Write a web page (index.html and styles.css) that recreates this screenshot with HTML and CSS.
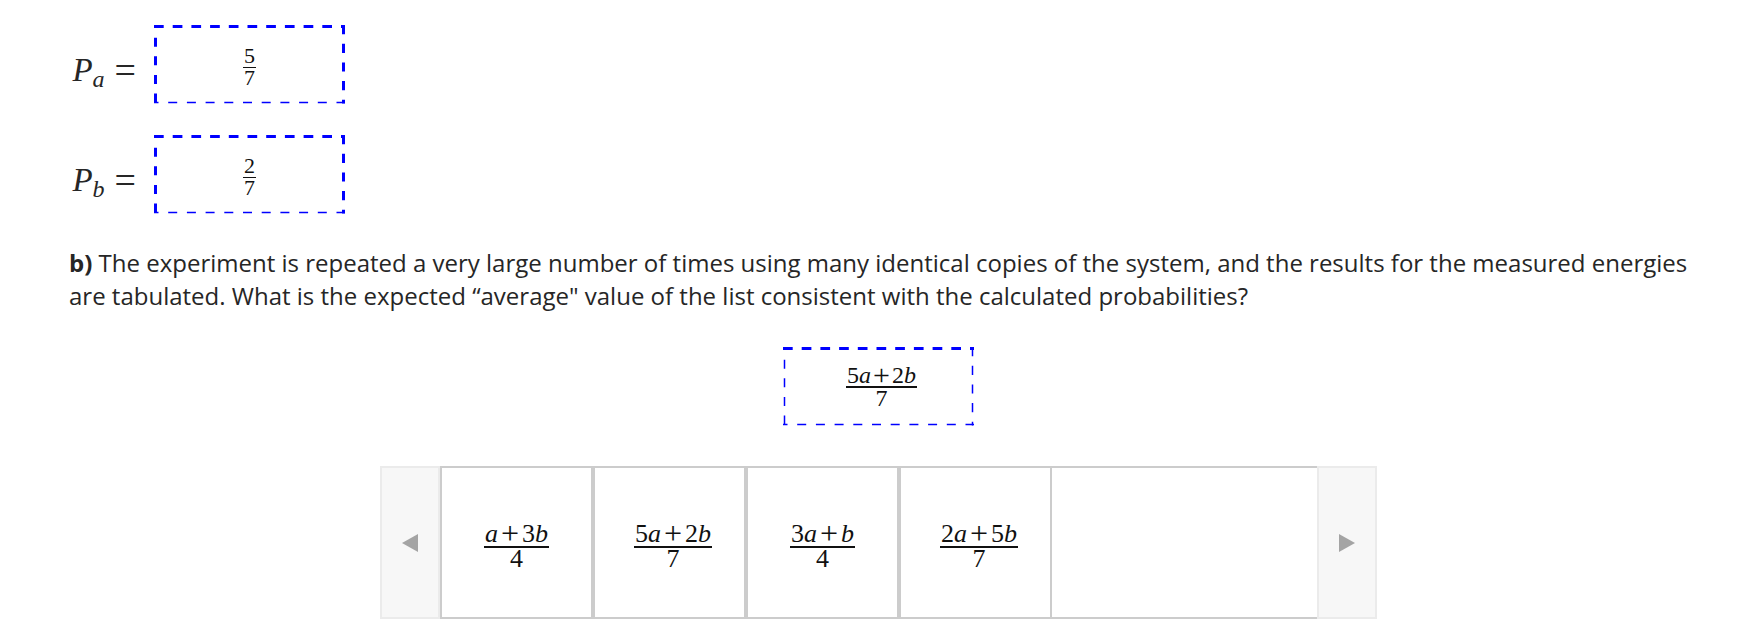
FILE: index.html
```html
<!DOCTYPE html>
<html lang="en">
<head>
<meta charset="utf-8">
<meta name="viewport" content="width=device-width, initial-scale=1">
<title>Measured energies</title>
<link rel="stylesheet" href="styles.css">
</head>
<body>
<svg class="defs" aria-hidden="true">
  <defs>
    <g id="dashes" fill="none" stroke="#00f">
      <path stroke-width="3" stroke-dasharray="9.7 9" d="M0 1.5H191"/>
      <path stroke-width="1.4" stroke-dasharray="9 9.7" stroke-dashoffset="4.5" d="M0 77.5H191"/>
    </g>
    <g id="sides" fill="none" stroke="#00f">
      <path stroke-dasharray="9.2 9.5" d="M189.5 0V78.5"/>
      <path stroke-dasharray="9 9.6" stroke-dashoffset="-12.7" d="M1.5 0V78.5"/>
    </g>
  </defs>
</svg>
<main class="page">
  <section class="probabilities">
    <div class="equation">
      <div class="lhs"><i>P</i><sub>a</sub><span class="equals">=</span></div>
      <div class="drop">
        <svg class="frame" viewBox="0 0 191 79" aria-hidden="true"><use href="#dashes"/><use href="#sides" stroke-width="3"/></svg>
        <div class="frac"><span class="num">5</span><span class="den">7</span></div>
      </div>
    </div>
    <div class="equation">
      <div class="lhs"><i>P</i><sub>b</sub><span class="equals">=</span></div>
      <div class="drop">
        <svg class="frame" viewBox="0 0 191 79" aria-hidden="true"><use href="#dashes"/><use href="#sides" stroke-width="3"/></svg>
        <div class="frac"><span class="num">2</span><span class="den">7</span></div>
      </div>
    </div>
  </section>

  <p class="question"><b>b)</b> The experiment is repeated a very large number of times using many identical copies of the system, and the results for the measured energies are tabulated. What is the expected “average" value of the list consistent with the calculated probabilities?</p>

  <div class="drop drop-average">
    <svg class="frame" viewBox="0 0 191 79" aria-hidden="true"><use href="#dashes"/><use href="#sides" stroke-width="1.5"/></svg>
    <div class="frac"><span class="num">5<i>a</i><span class="plus">+</span>2<i>b</i></span><span class="den">7</span></div>
  </div>

  <div class="tray">
    <button class="arrow" type="button" aria-label="Previous"><svg width="16" height="18" viewBox="0 0 16 18"><path d="M16 0v18L0 9z"/></svg></button>
    <div class="tiles">
      <button class="tile" type="button"><span class="frac"><span class="num"><i>a</i><span class="plus">+</span>3<i>b</i></span><span class="den">4</span></span></button>
      <button class="tile tile-wide" type="button"><span class="frac"><span class="num">5<i>a</i><span class="plus">+</span>2<i>b</i></span><span class="den">7</span></span></button>
      <button class="tile" type="button"><span class="frac"><span class="num">3<i>a</i><span class="plus">+</span><i>b</i></span><span class="den">4</span></span></button>
      <button class="tile tile-wide" type="button"><span class="frac"><span class="num">2<i>a</i><span class="plus">+</span>5<i>b</i></span><span class="den">7</span></span></button>
    </div>
    <button class="arrow" type="button" aria-label="Next"><svg width="16" height="18" viewBox="0 0 16 18"><path d="M0 0v18l16-9z"/></svg></button>
  </div>
</main>
</body>
</html>
```
FILE: styles.css
```css
* {
  box-sizing: border-box;
}

body {
  margin: 0;
  background: #fff;
  color: #262626;
  font-family: "Open Sans", sans-serif;
  font-size: 24px;
  line-height: 33px;
}

button {
  margin: 0;
  padding: 0;
  color: inherit;
  font: inherit;
  cursor: pointer;
}

.defs {
  position: absolute;
  width: 0;
  height: 0;
}

.page {
  padding: 25px 65px 20px 69px;
}

.probabilities {
  display: flex;
  flex-direction: column;
  gap: 31px;
}

.equation {
  display: flex;
  align-items: center;
  gap: 18px;
}

.lhs {
  width: 67px;
  padding-top: 10px;
  font-family: "Liberation Serif", serif;
  font-size: 33px;
  line-height: 32px;
  text-align: right;
  white-space: nowrap;
}

.lhs sub {
  font-size: 24px;
  font-style: italic;
  line-height: 0;
  vertical-align: -6px;
}

.equals {
  margin-left: 10px;
  font-size: 38px;
  line-height: 0;
  vertical-align: -2px;
}

.drop {
  position: relative;
  display: flex;
  justify-content: center;
  align-items: center;
  width: 191px;
  height: 79px;
  font-size: 22px;
}

.drop-average {
  margin: 0 auto;
  padding-left: 6px;
  font-size: 24px;
}

.frame {
  position: absolute;
  inset: 0;
  width: 100%;
  height: 100%;
}

.frac {
  display: inline-flex;
  flex-direction: column;
  align-items: center;
  padding-top: 5px;
  font-family: "Liberation Serif", serif;
  line-height: 20px;
  color: #111;
}

.drop-average .frac {
  padding-top: 0;
}

.num {
  padding: 0 1px 1px;
  border-bottom: 1px solid #111;
}

.drop-average .num {
  border-bottom-width: 2px;
}

.plus {
  margin: 0 2px;
  font-size: 30px;
  line-height: 0;
  vertical-align: -2px;
}

.question {
  margin: 32px 0 35px;
}

.tray {
  display: flex;
  max-width: 997px;
  height: 153px;
  margin: 40px auto 0;
}

.arrow {
  display: flex;
  flex: none;
  justify-content: center;
  align-items: center;
  width: 60px;
  border: 2px solid #ebebeb;
  background: #f7f7f7;
}

.arrow path {
  fill: #a4a4a4;
}

.tiles {
  display: flex;
  flex: 1;
  overflow: hidden;
  border: solid #ccc;
  border-width: 2px 0;
}

.tile {
  flex: none;
  width: 153px;
  border: solid #ccc;
  border-width: 0 2px;
  background: #fff;
  font-size: 26px;
}

.tile-wide {
  padding-left: 7px;
}

.tile .frac {
  padding-top: 0;
  line-height: 22px;
}

.tile .num {
  border-bottom-width: 2px;
}

.tile .plus {
  margin: 0 3px;
  font-size: 32px;
}
```
